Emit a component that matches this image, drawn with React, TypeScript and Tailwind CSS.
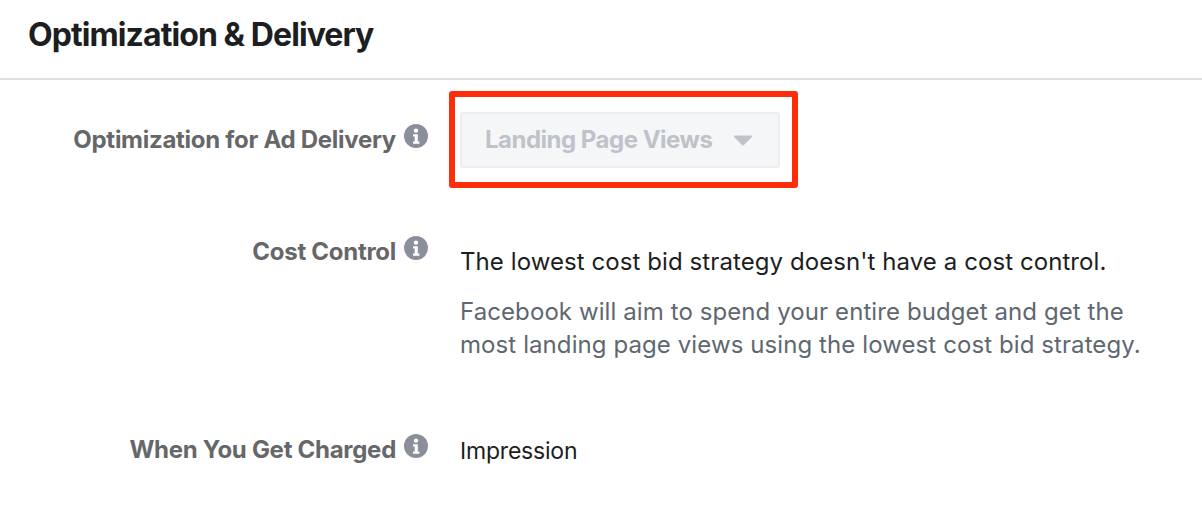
function InfoIcon() {
  return (
    <svg width="24" height="24" viewBox="0 0 24 24" className="shrink-0">
      <circle cx="12" cy="12" r="12" fill="#8a8f99" />
      <circle cx="12" cy="6.6" r="2.2" fill="#fff" />
      <path d="M9 10.2h4.8v7.4h1.6v2.2H9v-2.2h1.7v-5.2H9z" fill="#fff" />
    </svg>
  );
}

function Row({
  label,
  className,
  children,
}: {
  label: string;
  className?: string;
  children: React.ReactNode;
}) {
  return (
    <div className={`flex ${className ?? ""}`}>
      <div className="flex w-[428px] shrink-0 items-start justify-end gap-[8px]">
        <span className="text-[24px] leading-[32px] font-bold tracking-[-0.28px] text-[#666769]">
          {label}
        </span>
        <InfoIcon />
      </div>
      <div className="ml-[32px] min-w-0 flex-1">{children}</div>
    </div>
  );
}

export default function App() {
  return (
    <div className="h-[506px] w-[1202px] overflow-hidden bg-white font-['Inter',sans-serif]">
      <div className="h-[80px] border-b-2 border-[#dddfe2] pt-[15px] pl-[28px]">
        <h1 className="text-[32px] leading-[40px] font-bold tracking-[-0.92px] text-[#1c1e21]">
          Optimization &amp; Delivery
        </h1>
      </div>

      <Row label="Optimization for Ad Delivery" className="mt-[44px] h-[112px]">
        <div className="relative -mt-[12px] h-[56px] w-[320px]">
          <div className="absolute -top-[21px] -left-[11px] h-[97px] w-[349px] rounded-[3px] border-[6px] border-[#fe2d0a]" />
          <div className="flex h-full items-center rounded-[3px] border-2 border-[#ebedf0] bg-[#f5f6f7] pr-[26px] pl-[23px] text-[24px] font-bold text-[#bec3c9]">
            <span className="tracking-[-0.5px]">Landing Page Views</span>
            <svg width="18" height="12" viewBox="0 0 18 12" className="ml-auto">
              <path d="M1 1.5h16a1 1 0 0 1 .7 1.7l-8 8a1 1 0 0 1-1.4 0l-8-8A1 1 0 0 1 1 1.5z" fill="#bec3c9" />
            </svg>
          </div>
        </div>
      </Row>

      <Row label="Cost Control" className="h-[198px]">
        <p className="mt-[9px] text-[24px] leading-[34px] tracking-[0.08px] text-[#1c1e21]">
          The lowest cost bid strategy doesn't have a cost control.
        </p>
        <p className="mt-[16px] text-[24px] leading-[33px] tracking-[0.09px] text-[#606770]">
          Facebook will aim to spend your entire budget and get the
          <br />
          most landing page views using the lowest cost bid strategy.
        </p>
      </Row>

      <Row label="When You Get Charged">
        <p className="text-[23px] leading-[34px] tracking-[-0.2px] text-[#1c1e21]">Impression</p>
      </Row>
    </div>
  );
}
